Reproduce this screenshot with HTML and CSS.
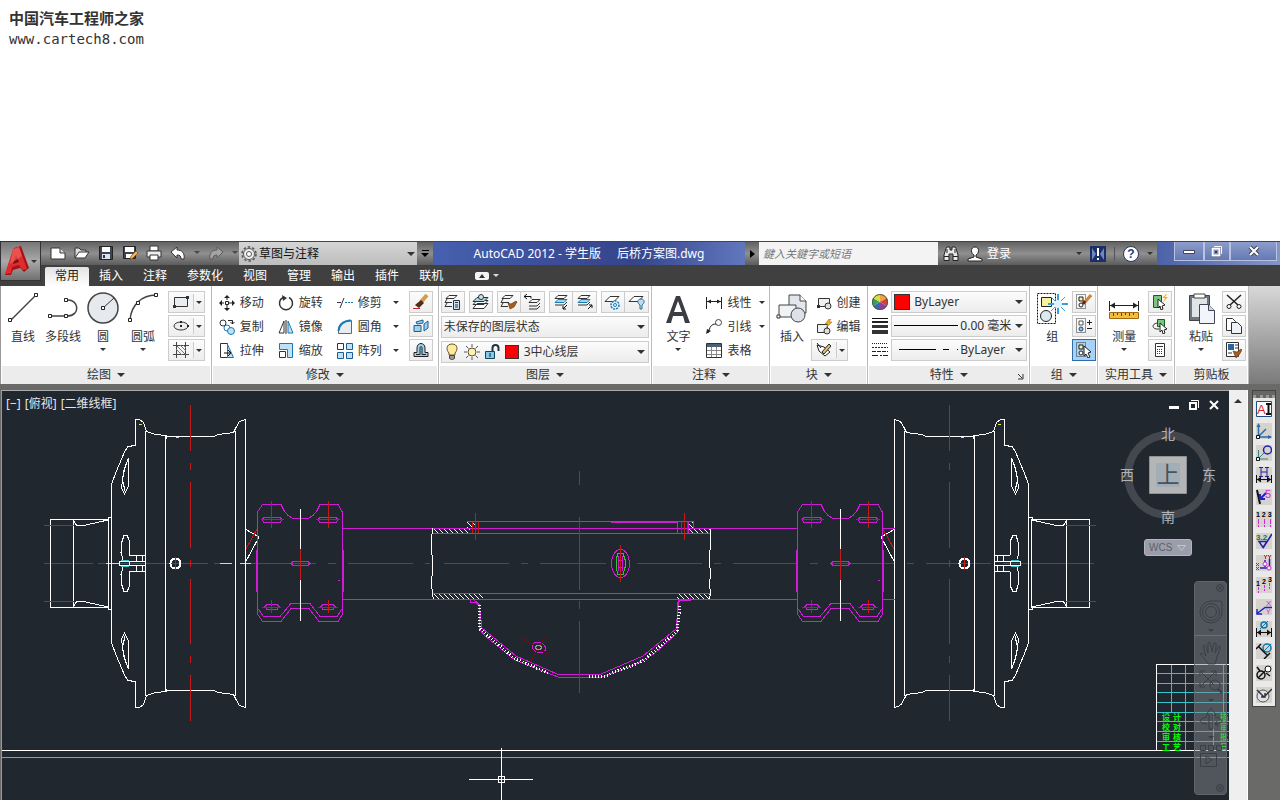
FILE: index.html
```
<!DOCTYPE html>
<html lang="zh-CN">
<head>
    <meta charset="UTF-8">
    <meta name="viewport" content="width=device-width, initial-scale=1.0">
    <title>AutoCAD 2012 - 学生版</title>
    <link rel="stylesheet" href="styles.css">
</head>
<body>
    <header class="site">
        <div class="site-name">中国汽车工程师之家</div>
        <div class="site-url">www.cartech8.com</div>
    </header>

    <div class="app">
        <div class="top">
            <button class="app-button" aria-label="应用程序菜单">
                <svg width="27" height="32" viewBox="0 0 27 32"><path d="M10 3l7-2 8 22-5 4-4-4-7 2-2 5-6 0z" fill="#a81217"/><path d="M9 4l6-2 8 22-5 1-3-5-7 2-1 6-6 1z" fill="#df2c2e"/><path d="M12 10l3 7-6 2z" fill="#7d0e12"/><path d="M9 4l6-2 3 9-12 8z" fill="#f26b62" opacity=".6"/></svg>
                <i class="caret dark"></i>
            </button>

            <div class="titlebar">
                <div class="qat">
                    <button aria-label="新建"><svg width="16" height="16" viewBox="0 0 16 16"><path d="M1 3h9l5 5v6H1z" fill="#fff" stroke="#333"/><path d="M10 3v5h5" fill="#ddd" stroke="#333"/></svg></button>
                    <button aria-label="打开"><svg width="16" height="16" viewBox="0 0 16 16"><path d="M1 13V3h4l2 2h5v3" fill="#ddd" stroke="#333"/><path d="M1 13l4-6h10l-4 6z" fill="#fff" stroke="#333"/></svg></button>
                    <button aria-label="保存"><svg width="16" height="16" viewBox="0 0 16 16"><path d="M1.500 1.500h13v13h-13z" fill="#3d454f" stroke="#222"/><path d="M4 2h8v5H4z" fill="#fff"/><path d="M4 9h8v5H4z" fill="#dbe4ee"/><path d="M5 10h2v3H5z" fill="#333"/></svg></button>
                    <button aria-label="另存为"><svg width="16" height="16" viewBox="0 0 16 16"><path d="M1.500 1.500h12v12h-12z" fill="#3d454f" stroke="#222"/><path d="M3 2h9v5H3zM4 9h7v4H4z" fill="#fff"/><path d="M8 15l1-4 5-5 2 2-5 5z" fill="#f2b648" stroke="#6b3d10" stroke-width=".6"/></svg></button>
                    <button aria-label="打印"><svg width="16" height="16" viewBox="0 0 16 16"><path d="M4 1h8v5H4z" fill="#fff" stroke="#333"/><path d="M1 6h14v6H1z" fill="#eee" stroke="#333"/><path d="M4 10h8v5H4z" fill="#fff" stroke="#333"/></svg></button>
                    <button aria-label="放弃"><svg width="16" height="16" viewBox="0 0 16 16"><path d="M1 7l6-5v3c5 0 8 3 7 9h-3c0-3-1-4-4-4v3z" fill="#fff" stroke="#333"/></svg></button>
                    <i class="caret dark"></i>
                    <button aria-label="重做"><svg width="16" height="16" viewBox="0 0 16 16"><path d="M15 7L9 2v3C4 5 1 8 2 14h3c0-3 1-4 4-4v3z" fill="#a4a4a4" stroke="#5c5c5c"/></svg></button>
                    <i class="caret dark"></i>
                </div>
                <div class="workspace-pick">
                    <svg width="16" height="16" viewBox="0 0 16 16"><circle cx="8" cy="8" r="7" fill="none" stroke="#555" stroke-width="1.500" stroke-dasharray="2.500 2"/><circle cx="8" cy="8" r="5.500" fill="#eee" stroke="#555"/><circle cx="8" cy="8" r="2.500" fill="#fff" stroke="#555"/></svg>
                    <select aria-label="工作空间"><option>草图与注释</option></select>
                    <i class="caret dark big-caret"></i>
                </div>
                <button class="more" aria-label="自定义"><span></span><i class="caret black"></i></button>
                <div class="doc-title"><span>AutoCAD 2012 - 学生版</span><span>后桥方案图.dwg</span></div>
                <button class="next" aria-label="展开"><i></i></button>
                <input class="search" type="text" placeholder="鍵入关鍵字或短语" aria-label="搜索">
                <div class="account">
                    <button aria-label="搜索"><svg width="16" height="16" viewBox="0 0 16 16"><path d="M3 2.500l1-1.500h3v3h2V1h3l1 1.500 2 6.500v5.500h-5V8H6v6.500H1V9z" fill="#e8e8e8" stroke="#222"/><path d="M1 10.500h5M10 10.500h5M4 3v4M12 3v4" stroke="#222"/></svg></button>
                    <button class="login"><svg width="16" height="16" viewBox="0 0 16 16"><path d="M8 1c5 0 4 7 1 8v2l6 2v2H1v-2l6-2V9C4 8 3 1 8 1z" fill="#fff" stroke="#222"/></svg>登录</button>
                    <i class="caret dark push"></i>
                    <button aria-label="交换"><svg width="16" height="16" viewBox="0 0 16 16"><path d="M0 0h16v16H0z" fill="#1b2f66"/><path d="M2 2l4 6-4 6zM14 2l-4 6 4 6z" fill="#7186c2"/><path d="M7 2h2v8H7zM7 12h2v2H7z" fill="#fff"/></svg></button>
                    <i class="sep"></i>
                    <button aria-label="帮助"><svg width="16" height="16" viewBox="0 0 16 16"><circle cx="8" cy="8" r="7.500" fill="#fff" stroke="#24355f"/><text x="8" y="12" text-anchor="middle" font-size="12" font-weight="bold" fill="#1d3c80">?</text></svg></button>
                    <i class="caret dark"></i>
                </div>
                <div class="win">
                    <button aria-label="最小化"><svg width="14" height="12" viewBox="0 0 14 12"><path d="M1.500 5.500h11v3h-11z" fill="#fff" stroke="#445"/></svg></button>
                    <button aria-label="还原"><svg width="12" height="12" viewBox="0 0 12 12"><path d="M3.500 1.500h7v7h-7z" fill="#cdd7ee" stroke="#fff"/><path d="M1.500 3.500h7v7h-7z" fill="#8193c4" stroke="#445" stroke-width="3"/><path d="M1.500 3.500h7v7h-7z" fill="#8193c4" stroke="#fff" stroke-width="2"/><path d="M4 6h2v2H4z" fill="#334"/></svg></button>
                    <button aria-label="关闭"><svg width="12" height="12" viewBox="0 0 12 12"><path d="M2 2l8 8M10 2l-8 8" stroke="#445" stroke-width="4"/><path d="M2 2l8 8M10 2l-8 8" stroke="#fff" stroke-width="2"/></svg></button>
                </div>
            </div>

            <nav class="tabs">
                <a class="active" href="#">常用</a>
                <a href="#">插入</a>
                <a href="#">注释</a>
                <a href="#">参数化</a>
                <a href="#">视图</a>
                <a href="#">管理</a>
                <a href="#">输出</a>
                <a href="#">插件</a>
                <a href="#">联机</a>
                <button class="fold" aria-label="最小化功能区"><svg width="14" height="8" viewBox="0 0 14 8"><rect width="14" height="8" rx="2" fill="#f4f4f4"/><path d="M4 6l3-4 3 4z" fill="#333"/></svg><i class="caret light"></i></button>
            </nav>
        </div>

        <div class="ribbon">
            <section class="panel">
                <div class="body draw">
                    <button class="big"><svg width="32" height="32" viewBox="0 0 32 32"><path d="M4 28L28 4" stroke="#444" stroke-width="1.500"/><path d="M1.500 26.500h3v3h-3zM27.500 1.500h3v3h-3z" fill="#fff" stroke="#222"/></svg>直线</button>
                    <button class="big"><svg width="32" height="32" viewBox="0 0 32 32"><path d="M4 24h16c14 0 12-17 0-16" fill="none" stroke="#444" stroke-width="1.500"/><path d="M1.500 22.500h3v3h-3zM17.500 22.500h3v3h-3zM17.500 6.500h3v3h-3z" fill="#fff" stroke="#222"/></svg>多段线</button>
                    <button class="big"><svg width="32" height="32" viewBox="0 0 32 32"><circle cx="16" cy="16" r="15" fill="#e6eaef" stroke="#444" stroke-width="1.500"/><path d="M16 16L27 6" stroke="#333"/><path d="M14.500 14.500h3v3h-3z" fill="#fff" stroke="#222"/></svg>圆<i class="caret dark"></i></button>
                    <button class="big"><svg width="32" height="32" viewBox="0 0 32 32"><path d="M3 28C4 13 15 3 29 3" fill="none" stroke="#444" stroke-width="1.500"/><path d="M1.500 26.500h3v3h-3zM9.500 9.500h3v3h-3zM27.500 1.500h3v3h-3z" fill="#fff" stroke="#222"/></svg>圆弧<i class="caret dark"></i></button>
                    <div class="stack">
                        <button class="split" aria-label="矩形"><svg width="16" height="16" viewBox="0 0 16 16"><path d="M1.500 3.500h13v9h-13z" fill="#e9edf2" stroke="#333"/><path d="M0 11h3v3H0zM13 2h3v3h-3z" fill="#333"/></svg><i class="caret dark"></i></button>
                        <button class="split" aria-label="椭圆"><svg width="16" height="16" viewBox="0 0 16 16"><ellipse cx="8" cy="8" rx="7" ry="4" fill="#eee" stroke="#333"/><path d="M7 7h2v2H7zM14 7h2v2h-2zM7 3h2v2H7z" fill="#222"/></svg><i class="caret dark"></i></button>
                        <button class="split" aria-label="图案填充"><svg width="16" height="16" viewBox="0 0 16 16"><path d="M3.500 0v16M12.500 0v16M0 3.500h16M0 12.500h16" stroke="#444"/><path d="M4 4l9 9M7 3l6 6M3 7l6 6M10 3l3 3" stroke="#777"/></svg><i class="caret dark"></i></button>
                    </div>
                </div>
                <h2>绘图<i class="caret dark big-caret"></i></h2>
            </section>

            <section class="panel">
                <div class="body modify">
                    <button class="small"><svg width="16" height="16" viewBox="0 0 16 16"><path d="M8 0l3 3H5zM8 16l3-3H5zM0 8l3-3v6zM16 8l-3-3v6z" fill="#222"/><path d="M8 2v12M2 8h12" stroke="#222" stroke-dasharray="3 1"/><path d="M6.500 6.500h3v3h-3z" fill="#fff" stroke="#222"/></svg>移动</button>
                    <button class="small"><svg width="16" height="16" viewBox="0 0 16 16"><path d="M5 2.500a6.500 6.500 0 1 0 6 0" fill="none" stroke="#333" stroke-width="1.500"/><path d="M4 0l5 3-4 3z" fill="#333"/></svg>旋转</button>
                    <button class="small"><svg width="16" height="16" viewBox="0 0 16 16"><path d="M0 7.500h4M3 13L7 3" stroke="#333"/><path d="M8 7.500h8" stroke="#1a78b5" stroke-dasharray="2 1"/></svg>修剪<i class="caret dark"></i></button>
                    <button class="tool" aria-label="删除"><svg width="16" height="16" viewBox="0 0 16 16"><path d="M14 1L8 8" stroke="#d99a4e" stroke-width="4"/><path d="M8 6l3 3-5 5-4-3z" fill="#4a2e18"/><path d="M0 14.500h7" stroke="#c22"/></svg></button>

                    <button class="small"><svg width="16" height="16" viewBox="0 0 16 16"><circle cx="4" cy="4" r="3" fill="#fff" stroke="#333"/><circle cx="8" cy="9" r="3" fill="#fff" stroke="#1a78b5"/><circle cx="12" cy="12" r="3.500" fill="#bfe0f5" stroke="#1a78b5"/><path d="M9 1.500h4.500V5M11.500 3l2 2 2-2" fill="none" stroke="#222"/></svg>复制</button>
                    <button class="small"><svg width="16" height="16" viewBox="0 0 16 16"><path d="M6 2v12H1z" fill="#fff" stroke="#333"/><path d="M10 2v12h5z" fill="#bfe0f5" stroke="#1a78b5"/><path d="M8 1v14" stroke="#222"/></svg>镜像</button>
                    <button class="small"><svg width="16" height="16" viewBox="0 0 16 16"><path d="M1.500 14.500V11C2 5 6 2 14.500 1.500v13z" fill="#e9edf2" stroke="#666"/><path d="M1.500 12C2 5 6 2 14 1.500" fill="none" stroke="#1a78b5" stroke-width="2"/></svg>圆角<i class="caret dark"></i></button>
                    <button class="tool" aria-label="分解"><svg width="16" height="16" viewBox="0 0 16 16"><path d="M1 7.500h7v6H1zM3 4l7-2v3l-6 1zM11 6l4-3v7l-4 3z" fill="#9fd0ee" stroke="#145f94"/></svg></button>

                    <button class="small"><svg width="16" height="16" viewBox="0 0 16 16"><path d="M1.500.5h7v14h-7z" fill="#fff" stroke="#333"/><path d="M8.500 1.500l6 13h-6z" fill="#bfe0f5" stroke="#1a78b5"/><path d="M5 10h6M9 7l3 3-3 3" fill="none" stroke="#111"/></svg>拉伸</button>
                    <button class="small"><svg width="16" height="16" viewBox="0 0 16 16"><path d="M1.500.5h13v14h-5v-8h-8z" fill="#bfe0f5" stroke="#1a78b5"/><path d="M1.500 8.500h6v6h-6z" fill="#fff" stroke="#333"/></svg>缩放</button>
                    <button class="small"><svg width="16" height="16" viewBox="0 0 16 16"><path d="M.5.500h6v6h-6z" fill="#fff" stroke="#333"/><path d="M9.500.5h6v6h-6zM.5 9.500h6v6h-6zM9.500 9.500h6v6h-6z" fill="#bfe0f5" stroke="#1a5f90"/></svg>阵列<i class="caret dark"></i></button>
                    <button class="tool" aria-label="偏移"><svg width="16" height="16" viewBox="0 0 16 16"><path d="M1 14.500h14v-4h-3V6c0-6-8-6-8 0v4.500H1z" fill="#9fd0ee" stroke="#222"/><path d="M3 12.500h4V6c0-2 2-2 2 0v6.500h4" fill="none" stroke="#222"/></svg></button>
                </div>
                <h2>修改<i class="caret dark big-caret"></i></h2>
            </section>

            <section class="panel">
                <div class="body layers">
                    <div class="tool-row">
                        <button class="tool" aria-label="图层特性"><svg width="18" height="16" viewBox="0 0 18 16"><path d="M5 1.500h8l-3 3H2zM3 5l-2 3.500h7M3 9l-2 3.500h7" fill="none" stroke="#333"/><path d="M9.500 6.500h6v9h-6z" fill="#cfe2f2" stroke="#234"/><path d="M11 8.500h3M11 11h3M11 13h3" stroke="#234"/></svg></button>
                        <button class="tool" aria-label="置为当前"><svg width="18" height="16" viewBox="0 0 18 16"><path d="M5 9.500h11l-4 5H1zM5 6.500h11l-4 4H1z" fill="#fff" stroke="#333"/><path d="M5 3.500h11l-4 4H1z" fill="#9fd8ee" stroke="#234"/><circle cx="9" cy="3" r="2.500" fill="#ddd" stroke="#333"/></svg></button>
                        <div class="pair">
                            <button class="tool" aria-label="匹配"><svg width="18" height="16" viewBox="0 0 18 16"><path d="M5 1.500h8l-3 3H2zM3 5l-2 3.500h8M3 9l-2 3.500h7" fill="none" stroke="#333"/><path d="M8 9l3 1 5-3 1 1-3 5-4 2z" fill="#a65d20" stroke="#5b300c" stroke-width=".6"/></svg></button>
                            <button class="tool" aria-label="上一个"><svg width="18" height="16" viewBox="0 0 18 16"><path d="M8 5.500h8l-3 3H5zM16 9l-3 3H5M16 12l-3 3H5" fill="none" stroke="#333"/><path d="M0 2.500h7v2M3 0L0 2.500 3 5" fill="none" stroke="#111"/></svg></button>
                        </div>
                        <div class="pair">
                            <button class="tool" aria-label="隔离"><svg width="18" height="16" viewBox="0 0 18 16"><path d="M6 1.500h9l-3 3H3zM15 8l-3 3H3" fill="none" stroke="#333"/><path d="M6 5.500h9l-3 3H3z" fill="#9fd8ee" stroke="#1a78b5"/><path d="M15 11l-4 4M11 12v3h3" fill="none" stroke="#111"/></svg></button>
                            <button class="tool" aria-label="取消隔离"><svg width="18" height="16" viewBox="0 0 18 16"><path d="M5 1.500h9l-3 3H2zM14 8l-3 3H2" fill="none" stroke="#333"/><path d="M5 5.500h9l-3 3H2z" fill="#9fd8ee" stroke="#1a78b5"/><path d="M12 15l4-4M13 11h3v3" fill="none" stroke="#111"/></svg></button>
                        </div>
                        <div class="pair">
                            <button class="tool" aria-label="冻结"><svg width="18" height="16" viewBox="0 0 18 16"><path d="M6 2.500h9l-5 5H1z" fill="#fff" stroke="#333"/><circle cx="11" cy="11" r="4" fill="#e5f4fc" stroke="#1a78b5" stroke-width="1.500" stroke-dasharray="2 1"/><circle cx="11" cy="11" r="1.500" fill="#fff" stroke="#1a78b5"/></svg></button>
                            <button class="tool" aria-label="关闭"><svg width="18" height="16" viewBox="0 0 18 16"><path d="M6 2.500h9l-5 5H1z" fill="#fff" stroke="#333"/><path d="M13 5c4 0 4 4 1 6v4h-2v-4c-3-2-3-6 1-6z" fill="#b9dcf2" stroke="#3a6c94"/></svg></button>
                        </div>
                    </div>
                    <div class="drop"><select aria-label="图层状态"><option>未保存的图层状态</option></select><i class="caret dark big-caret"></i></div>
                    <div class="drop layer-drop">
                        <svg width="16" height="18" viewBox="0 0 16 18"><path d="M8 1c6 0 6 6 3 9v2H5v-2C2 7 2 1 8 1z" fill="#ffe9a0" stroke="#665522"/><path d="M5.500 12.500h5v3l-2 1h-1l-2-1z" fill="#999" stroke="#444"/></svg>
                        <svg width="16" height="18" viewBox="0 0 16 18"><path d="M8 1v16M0 9h16M2 3l12 12M14 3L2 15" stroke="#555"/><circle cx="8" cy="9" r="5" fill="#fff"/><circle cx="8" cy="9" r="4" fill="#fff2a8" stroke="#554"/></svg>
                        <svg width="16" height="18" viewBox="0 0 16 18"><path d="M8.500 8V5c0-4 6-4 6 0v3" fill="none" stroke="#234" stroke-width="2"/><path d="M1.500 8.500h9v7h-9z" fill="#86c8ee" stroke="#145"/><path d="M6 10v4" stroke="#123"/></svg>
                        <span class="swatch"></span>
                        <select aria-label="图层"><option>3中心线层</option></select><i class="caret dark big-caret"></i>
                    </div>
                </div>
                <h2>图层<i class="caret dark big-caret"></i></h2>
            </section>

            <section class="panel">
                <div class="body annotate">
                    <button class="big"><svg width="32" height="32" viewBox="0 0 32 32"><path d="M14 4h4l10 27h-5l-2-7H11l-2 7H4zM16 9l-4 11h8z" fill="#3a3d42" fill-rule="evenodd"/></svg>文字<i class="caret dark"></i></button>
                    <div class="stack">
                        <button class="small"><svg width="16" height="16" viewBox="0 0 16 16"><path d="M.5 2v12M15.500 2v12M1 6.500h14" stroke="#222"/><path d="M1 6.500l4-2v4zM15 6.500l-4-2v4z" fill="#222"/></svg>线性<i class="caret dark"></i></button>
                        <button class="small"><svg width="16" height="16" viewBox="0 0 16 16"><circle cx="12.500" cy="3.500" r="3" fill="#fff" stroke="#444"/><path d="M10 5C5 5 4 8 2 14" fill="none" stroke="#222"/><path d="M0 15l1-5 4 2z" fill="#222"/></svg>引线<i class="caret dark"></i></button>
                        <button class="small"><svg width="16" height="16" viewBox="0 0 16 16"><path d="M.5.500h15v14H.5z" fill="#fff" stroke="#333"/><path d="M1 1h14v3H1z" fill="#4c6078"/><path d="M1 7.500h14M1 11.500h14M5.500 4v10M10.500 4v10" stroke="#888"/></svg>表格</button>
                    </div>
                </div>
                <h2>注释<i class="caret dark big-caret"></i></h2>
            </section>

            <section class="panel">
                <div class="body block">
                    <button class="big"><svg width="32" height="32" viewBox="0 0 32 32"><path d="M13 3h11l6 6v12H13z" fill="#e3e7ec" stroke="#444"/><path d="M24 3v6h6" fill="#fff" stroke="#444"/><path d="M3 13h17v12H3z" fill="#f0f3f6" stroke="#444"/><circle cx="22" cy="23" r="7" fill="#dde2e8" stroke="#444"/><path d="M1 23h3v3H1z" fill="#fff" stroke="#333"/></svg>插入</button>
                    <div class="stack">
                        <button class="small"><svg width="16" height="16" viewBox="0 0 16 16"><path d="M2.500 3.500h11v8h-11z" fill="#eef1f4" stroke="#333"/><circle cx="12" cy="11" r="3" fill="#ddd" stroke="#333"/><path d="M1 10h3v3H1z" fill="#333"/></svg>创建</button>
                        <button class="small"><svg width="16" height="16" viewBox="0 0 16 16"><path d="M1.500 5.500h10v8h-10z" fill="#eef1f4" stroke="#333"/><circle cx="11" cy="12" r="3" fill="#ddd" stroke="#333"/><path d="M13 0L9 5h3l-2 4 6-6h-3l2-3z" fill="#f7b12d" stroke="#a05a10" stroke-width=".5"/></svg>编辑</button>
                        <button class="split" aria-label="属性"><svg width="16" height="16" viewBox="0 0 16 16"><path d="M1 3l7 2 6 5-5 4-6-5z" fill="#fff" stroke="#222"/><path d="M1 1l4 5M6 10l7-8 2 2-7 8z" fill="#e9c16c" stroke="#222"/></svg><i class="caret dark"></i></button>
                    </div>
                </div>
                <h2>块<i class="caret dark big-caret"></i></h2>
            </section>

            <section class="panel">
                <div class="body props">
                    <svg width="16" height="16" viewBox="0 0 16 16"><path d="M8 8V0a8 8 0 0 1 7 4z" fill="#f2a23a"/><path d="M8 8l7-4a8 8 0 0 1 0 8z" fill="#d8412f"/><path d="M8 8l7 4a8 8 0 0 1-7 4z" fill="#8d3f98"/><path d="M8 8v8a8 8 0 0 1-7-4z" fill="#3767b5"/><path d="M8 8l-7 4a8 8 0 0 1 0-8z" fill="#35a05a"/><path d="M8 8L1 4a8 8 0 0 1 7-4z" fill="#d9dd4a"/><circle cx="8" cy="8" r="7.500" fill="none" stroke="#555"/></svg>
                    <div class="drop"><span class="swatch wide"></span><select aria-label="对象颜色"><option>ByLayer</option></select><i class="caret dark big-caret"></i></div>
                    <svg width="16" height="16" viewBox="0 0 16 16"><path d="M0 .5h16" stroke="#111"/><path d="M0 4h16" stroke="#222" stroke-width="2"/><path d="M0 8.500h16" stroke="#333" stroke-width="3"/><path d="M0 14h16" stroke="#333" stroke-width="4"/></svg>
                    <div class="drop line-drop"><svg width="64" height="2" viewBox="0 0 64 2"><path d="M0 .5h64" stroke="#000"/></svg><select aria-label="线宽"><option>0.00 毫米</option></select><i class="caret dark big-caret"></i></div>
                    <svg width="16" height="16" viewBox="0 0 16 16"><path d="M0 1.500h16" stroke="#222" stroke-dasharray="1 1"/><path d="M0 5.500h16" stroke="#222" stroke-dasharray="2 1"/><path d="M0 9.500h16" stroke="#222" stroke-dasharray="4 1"/><path d="M0 13.500h16" stroke="#222" stroke-dasharray="6 2 2 1"/></svg>
                    <div class="drop line-drop"><svg width="64" height="2" viewBox="0 0 64 2"><path d="M5 .5h37M49 .5h6M63 .5h1" stroke="#000"/></svg><select aria-label="线型"><option>ByLayer</option></select><i class="caret dark big-caret"></i></div>
                </div>
                <h2>特性<i class="caret dark big-caret"></i><svg class="launcher" width="7" height="7" viewBox="0 0 7 7"><path d="M1 1l4 4M6 1v5H1" fill="none" stroke="#333"/></svg></h2>
            </section>

            <section class="panel">
                <div class="body side">
                    <button class="big"><svg width="32" height="32" viewBox="0 0 32 32"><path d="M1.500 1.500h18v30h-18z" fill="none" stroke="#111" stroke-dasharray="2 1"/><path d="M5.500 5.500h10v9h-10z" fill="#f4f3a2" stroke="#222"/><circle cx="10" cy="24" r="5.500" fill="#dcebf2" stroke="#222"/><path d="M22 2v20M12 12h20" stroke="#3d9fd8" stroke-width="2"/><path d="M15 5l14 14M29 5L15 19" stroke="#3d9fd8"/><circle cx="22" cy="12" r="4" fill="#dff3fd"/></svg>组</button>
                    <div class="stack">
                        <button class="tool" aria-label="解除编组"><svg width="16" height="16" viewBox="0 0 16 16"><path d="M.5.5h9v14h-9z" fill="none" stroke="#333" stroke-dasharray="1 1"/><path d="M3 3h4v4H3z" fill="#f4f3a2" stroke="#222"/><circle cx="5" cy="11" r="2" fill="#fff" stroke="#222"/><path d="M15 1L9 8" stroke="#c88838" stroke-width="3"/><path d="M9 7l-2 3" stroke="#622" stroke-width="3"/></svg></button>
                        <button class="tool" aria-label="组编辑"><svg width="16" height="16" viewBox="0 0 16 16"><path d="M.5.5h9v14h-9z" fill="none" stroke="#333" stroke-dasharray="1 1"/><path d="M3 3h4v4H3z" fill="#fff" stroke="#555"/><circle cx="5" cy="11" r="2" fill="#8fc4ee" stroke="#246"/><path d="M11 4.500h5M13.500 2v5M11 10.500h5" stroke="#222"/></svg></button>
                        <button class="tool on" aria-label="启用组选择"><svg width="16" height="16" viewBox="0 0 16 16"><path d="M.5.5h9v14h-9z" fill="none" stroke="#333" stroke-dasharray="1 1"/><path d="M3 3h4v4H3z" fill="#f4f3a2" stroke="#222"/><circle cx="5" cy="11" r="2" fill="#fff" stroke="#222"/><path d="M8 4l7 6-3 1 2 4-2 1-2-4-2 2z" fill="#fff" stroke="#222"/></svg></button>
                    </div>
                </div>
                <h2>组<i class="caret dark big-caret"></i></h2>
            </section>

            <section class="panel">
                <div class="body side roomy">
                    <button class="big"><svg width="32" height="32" viewBox="0 0 32 32"><path d="M1.500 9v10M30.500 9v10M2 13.500h28" stroke="#222"/><path d="M2 13.500l5-3v6zM30 13.500l-5-3v6z" fill="#222"/><path d="M1.500 20.500h29v6h-29z" fill="#f1bd3f" stroke="#a06a10"/><path d="M5.500 21v3M9.500 21v2M13.500 21v3M17.500 21v2M21.500 21v3M25.500 21v2" stroke="#6b4208"/></svg>测量<i class="caret dark"></i></button>
                    <div class="stack">
                        <button class="tool" aria-label="快速选择"><svg width="16" height="16" viewBox="0 0 16 16"><path d="M1.500 1.500h8v12h-8z" fill="#7cc57e" stroke="#145f20"/><path d="M6 5l7 6-3 1 1 3-2 1-1-4-2 2z" fill="#fff" stroke="#222"/><path d="M14 0l-4 4h3l-2 4 5-5h-3l2-3z" fill="#f7b12d"/></svg></button>
                        <button class="tool" aria-label="全部选择"><svg width="16" height="16" viewBox="0 0 16 16"><path d="M5.500 1.500h7v7h-7z" fill="#7cc57e" stroke="#145f20"/><path d="M5 5c-6 1-5 7 2 6" fill="none" stroke="#333"/><path d="M8 5l7 6-3 1 1 3-2 1-1-4-2 2z" fill="#fff" stroke="#222"/></svg></button>
                        <button class="tool" aria-label="计算器"><svg width="16" height="16" viewBox="0 0 16 16"><path d="M3.500 1.500h9v13h-9z" fill="#fff" stroke="#333"/><path d="M5 4.500h6" stroke="#333"/><path d="M5 7.500h6M5 9.500h6M5 11.500h6" stroke="#333" stroke-dasharray="1 1"/></svg></button>
                    </div>
                </div>
                <h2>实用工具<i class="caret dark big-caret"></i></h2>
            </section>

            <section class="panel">
                <div class="body side roomy">
                    <button class="big"><svg width="32" height="32" viewBox="0 0 32 32"><path d="M4.500 3.500h20v25h-20z" fill="#6e7680" stroke="#444"/><path d="M7 6h15v19H7z" fill="#e2e5e8"/><path d="M9 2h11v4H9z" fill="#fff" stroke="#444"/><path d="M14.500 12.500h9l6 6v13h-15z" fill="#f2f6fa" stroke="#445"/><path d="M23.500 12.500v6h6" fill="#cdd7e2" stroke="#445"/></svg>粘贴<i class="caret dark"></i></button>
                    <div class="stack">
                        <button class="tool" aria-label="剪切"><svg width="16" height="16" viewBox="0 0 16 16"><path d="M1 1l11 10M15 1L4 11" stroke="#222" stroke-width="1.500"/><circle cx="3" cy="12.500" r="2" fill="#fff" stroke="#222"/><circle cx="13" cy="12.500" r="2" fill="#fff" stroke="#222"/></svg></button>
                        <button class="tool" aria-label="复制"><svg width="16" height="16" viewBox="0 0 16 16"><path d="M.5.500h6l3 3v9h-9z" fill="#fff" stroke="#333"/><path d="M5.500 4.500h6l4 4v7h-10z" fill="#eef2f6" stroke="#333"/></svg></button>
                        <button class="tool" aria-label="特性匹配"><svg width="16" height="16" viewBox="0 0 16 16"><path d="M.5.5h12v14H.5z" fill="#fff" stroke="#333"/><path d="M2 2h6v6H2z" fill="#2c659c"/><path d="M9 3h3M9 6h3M2 11h4" stroke="#333"/><path d="M7 9l4 1 4-3 1 1-3 5-3 3z" fill="#a65d20" stroke="#5b300c" stroke-width=".6"/></svg></button>
                    </div>
                </div>
                <h2>剪贴板</h2>
            </section>
            <div class="ribbon-rest"></div>
        </div>

        <div class="workspace">
            <main class="viewport">
                <svg class="drawing" viewBox="2 391 1227 409">
                    <defs>
                        <pattern id="hatch" width="5" height="5" patternUnits="userSpaceOnUse"><path d="M0 0l5 5" stroke="#fff"/></pattern>

                        <!-- rim and hub, upper half only -->
                        <g id="half-wheel">
                            <path d="M50.500 564V519.500H108.500M73.500 564V519.500M73 520l4 6 9-1 22-5M108.500 564V519M111.500 564V484l5-13 8-19 3-5 8-2V419.500h4l4 3 3 9 9 3 11 1v3M111 517.500h-3v3"/>
                            <path d="M145.500 564V431M165.500 564V436.500h48l5-2 15-2 2-4 4-7 6-2V564M235.500 564V431"/>
                            <path d="M128.500 458l-5 14-2 16 3 6 4-8zM125.500 464l-3 16 3 13"/>
                            <path d="M145 555.500h-15l-1-16-2-4h-3l-2 6-1 11 2 7M136.500 555v6M142.500 555v6M130 561.500h15"/>
                        </g>
                        <g id="wheel">
                            <g class="white">
                                <use href="#half-wheel"/>
                                <use href="#half-wheel" transform="matrix(1 0 0 -1 0 1127)"/>
                                <circle cx="175.500" cy="563.500" r="5" stroke-width="2"/>
                                <path d="M245 529l14 8-14 26M119.500 561.500h10v4h-10z"/>
                            </g>
                            <path class="cyan" d="M121 560.500h8M121 566.500h8"/>
                            <g class="red">
                                <path d="M190.500 405v46M190.500 463v7M190.500 482v66M190.500 560v7M190.500 579v65M190.500 656v7M190.500 675v46"/>
                                <path d="M44 525.500h30M44 601.500h30M175.500 557v13M246 549l11-20"/>
                            </g>
                            <path class="yellow" d="M139 424.500h3M176 437.500h3"/>
                        </g>
                        <g id="bracket">
                            <g class="magenta">
                                <path d="M262.500 504.500H281l3 6 4 5 5 3h15l5-3 4-5 3-6h18l4.500 8V614l-4.500 7.500H319l-10-13h-18l-10 13h-18.500l-5-7.500V512z"/>
                                <path d="M257.500 608l6 8.500H280l11-13h19l10 13h17l5.500-8.500"/>
                                <path d="M264 517.500h16l2 2-2 3h-16l-2-3zM320 517.500h16l2 2-2 3h-16l-2-3zM267 604.500h10l2 2-2 3h-10l-2-3zM323 604.500h10l2 2-2 3h-10l-2-3zM293 561.500h15l2 2-2 2h-15l-2-2z"/>
                                <path d="M257 550v42M343 550v42" stroke-width="2"/>
                                <path d="M338 580.500h2"/>
                            </g>
                            <path class="white" d="M300.500 509v40M300.500 580v41"/>
                            <path class="red" d="M300.500 549v31M271.500 501v27M328.500 501v27M271.500 600v13M328.500 600v13M261 519.500h23M316 519.500h24M262 607.500h19M318 607.500h20"/>
                        </g>
                    </defs>

                    <path class="red" d="M44 563.500h49M98 563.500h110M214 563.500h6M246 563.500h70M328 563.500h8M348 563.500h65M425 563.500h5M444 563.500h65M521 563.500h7M540 563.500h66M637 563.500h65M714 563.500h7M733 563.500h64M810 563.500h8M830 563.500h65M907 563.500h7M926 563.500h65M1003 563.500h91"/>
                    <path class="yellow" d="M106 563.500h13M220 563.500h12M240 563.500h11"/>
                    <use href="#wheel"/>
                    <use href="#wheel" transform="matrix(-1 0 0 1 1140 0)"/>
                    <use href="#bracket"/>
                    <use href="#bracket" transform="translate(540 0)"/>

                    <!-- axle housing -->
                    <path fill="url(#hatch)" d="M432 529h38v5h-38zM688 529h22v5h-22zM433 593h50v6h-50zM677 593h33v6h-33zM467 522h9v7h-9zM689 521h4v8h-4z"/>
                    <g class="magenta">
                        <path d="M343 528.500h455M343 599.500h455M883 528.500h12M883 599.500h12M432 533.500h278M433 593.500h277M467 521.500h226v7M677.500 521v12M688.500 521v12"/>
                        <path d="M611 522h66" stroke-width="2"/>
                        <path d="M470 600v2h6l3 4 1 24 5 6 30 24 20 8 23 9h44l32-12 20-11 23-21 1-31 3-2h9v-2"/>
                        <path d="M474 600l5 4 3 24 34 28 41 18h44l42-18 33-27 3-30"/>
                        <ellipse cx="620.500" cy="563.500" rx="9" ry="14"/>
                        <path d="M618.500 556v15M622.500 556v15M618 560.500h5M618 567.500h5"/>
                        <ellipse cx="539" cy="647.500" rx="7" ry="5" transform="rotate(20 539 647)"/>
                    </g>
                    <path class="white shell" d="M479 605l1 24 34 29 34 15M589 677l16-1 38-15 34-30 3-26"/>
                    <path class="green" d="M618 553.500h5l2 6v8l-2 7h-5l-2-7v-8z"/>
                    <path class="darkred" d="M521 638l29 17M545 637l-15 25"/>
                    <ellipse class="gray" cx="538.500" cy="647.500" rx="3" ry="2"/>
                    <path class="white" d="M432.500 528.500l-1 12 1 28-1 15 1 10 1 6M710.500 528.500v12l-1 20 1 14-1 10 1 8-1 7"/>
                    <path class="red" d="M579.500 471v14M579.500 517v73M579.500 601v8M579.500 621v72M475.500 513v27M684.500 513v27M472.500 522v11M478.500 522v11M681.500 522v11M687.500 522v11M620.500 545v37"/>

                    <!-- sheet frame and title block -->
                    <path class="cyan" d="M2 757.500h1227M1171.500 665v47M1185.500 665v85M1213.500 712v38M1223.500 665v47M1157 673.500h72M1157 683.500h72M1157 692.500h72M1157 702.500h72M1157 712.500h72M1157 721.500h72M1157 731.500h72M1157 741.500h72"/>
                    <path class="white" d="M2 750.500h1227M1156.500 750v-85.500h73"/>
                    <g class="block-text">
                        <text x="1162" y="720">设</text><text x="1173" y="720">计</text><text x="1220" y="720">描</text>
                        <text x="1162" y="730">校</text><text x="1173" y="730">对</text><text x="1220" y="730">审</text>
                        <text x="1162" y="740">审</text><text x="1173" y="740">核</text><text x="1220" y="740">批</text>
                        <text x="1162" y="750">工</text><text x="1173" y="750">艺</text><text x="1220" y="750">日</text>
                    </g>

                    <path class="white" d="M469 779.500h64M501.500 748v52M498.500 776.500h6v6h-6z"/>
                </svg>

                <div class="view-label"><span>[−]</span><span>[俯视]</span><span>[二维线框]</span></div>
                <div class="view-buttons">
                    <button aria-label="最小化"><svg width="12" height="12" viewBox="0 0 12 12"><path d="M1 7h10v3H1z" fill="#fff"/></svg></button>
                    <button aria-label="还原"><svg width="12" height="12" viewBox="0 0 12 12"><path d="M3 1.500h7.500V9" fill="none" stroke="#fff"/><path d="M2 4h6v6H2z" fill="none" stroke="#fff" stroke-width="2"/></svg></button>
                    <button aria-label="关闭"><svg width="12" height="12" viewBox="0 0 12 12"><path d="M2 2l8 8M10 2l-8 8" stroke="#fff" stroke-width="2"/></svg></button>
                </div>
                <svg class="viewcube" width="98" height="100" viewBox="0 0 98 100">
                    <circle cx="49" cy="49" r="40" fill="none" stroke="#43484f" stroke-width="8"/>
                    <path d="M30.500 30.500h37v37h-37z" fill="#b4b5b6" stroke="#8f9193"/>
                    <path d="M37 37h24v24H37z" fill="#a3adb5"/>
                    <text class="top-face" x="49" y="57">上</text>
                    <text x="49" y="13">北</text>
                    <text x="8" y="54">西</text>
                    <text x="90" y="54">东</text>
                    <text x="49" y="96">南</text>
                </svg>
                <button class="wcs">WCS<svg width="9" height="6" viewBox="0 0 9 6"><path d="M.5.5h8l-4 5z" fill="none" stroke="#c0c3cb"/></svg></button>
                <div class="navbar">
                    <button class="dot" aria-label="关闭"><svg width="8" height="8" viewBox="0 0 8 8"><circle cx="4" cy="4" r="3.500"/><path d="M2 2l4 4M6 2L2 6"/></svg></button>
                    <button aria-label="控制盘"><svg width="24" height="24" viewBox="0 0 24 24"><path d="M12 1a11 11 0 1 0 11 11V3a2 2 0 0 0-2-2z"/><circle cx="12" cy="12" r="5.500"/><circle cx="12" cy="12" r="8.500"/></svg><i class="caret dark"></i></button>
                    <hr>
                    <button aria-label="平移"><svg width="24" height="24" viewBox="0 0 24 24"><path d="M9 23c-2-4-5-7-8-10 2-2 4 0 6 2L4 5c2-2 3 0 5 7L9 2c2-2 3 0 4 9l2-9c2-1 3 0 1 10l4-7c2 0 2 1-2 11l-2 7z"/></svg></button>
                    <button aria-label="缩放"><svg width="24" height="24" viewBox="0 0 24 24"><path d="M2 2l13 13M16 2L2 16M1 6V1h5M12 1h5v5M1 12v5h5"/><circle cx="16" cy="15" r="5"/><path d="M19 19l4 4" stroke-width="2"/></svg><i class="caret dark"></i></button>
                    <button aria-label="动态观察"><svg width="24" height="24" viewBox="0 0 24 24"><path d="M10 22V8H7l5-7 5 7h-3v14zM8 10c-9 2-9 6 0 7M16 10c9 2 9 6 0 7l2-3M16 17l3 2"/></svg><i class="caret dark"></i></button>
                    <button aria-label="运动"><svg width="24" height="24" viewBox="0 0 24 24"><path d="M1.500 1.500h5v5h-5zM9.500 1.500h5v5h-5zM17.500 1.500h5v5h-5zM1.500 9.500h16v13h-16zM7 12v8l6-4z"/></svg></button>
                    <button class="dot" aria-label="选项"><svg width="8" height="8" viewBox="0 0 8 8"><circle cx="4" cy="4" r="3.500"/><path d="M2 3h4M2 5h4"/></svg></button>
                </div>
            </main>

            <div class="scrollbar"><i></i></div>

            <aside class="toolbar">
                <div class="grip"></div>
                <button aria-label="文字编辑"><svg width="16" height="16" viewBox="0 0 16 16"><path d="M.5.5h15v15H.5z" fill="#fff" stroke="#1c4f7e"/><text x="1" y="13" font-size="13" fill="#d22">A</text><path d="M10 3h5M10 13h5M12.500 3v10" stroke="#111" stroke-width="2"/></svg></button>
                <button aria-label="坐标"><svg width="16" height="16" viewBox="0 0 16 16"><path d="M2.500 2v12H15M3 13l7-7" fill="none" stroke="#2b6ca5" stroke-width="1.500"/><path d="M2.500 0l2 4h-4zM16 14l-4-2v4z" fill="#2b6ca5"/><path d="M.5 12.500h3v3h-3z" fill="#fff" stroke="#111"/></svg></button>
                <button aria-label="圆坐标"><svg width="16" height="16" viewBox="0 0 16 16"><path d="M2.500 5v9H12M3 13l5-5" fill="none" stroke="#3a8080"/><circle cx="11.500" cy="5" r="4" fill="none" stroke="#22a" stroke-width="1.500"/><path d="M.5 12.500h3v3h-3z" fill="#fff" stroke="#111"/></svg></button>
                <button aria-label="尺寸"><svg width="16" height="16" viewBox="0 0 16 16"><path d="M3 .5h4M5 0v9M3 9.500h4M9 .5h4M11 0v9M9 9.500h4M5 5h6" stroke="#229"/><path d="M.5 8v8M15.500 8v8M1 12.500h14" stroke="#111"/><path d="M1 12.500l4-3v6zM15 12.500l-4-3v6z" fill="#111"/></svg></button>
                <button aria-label="倒角"><svg width="16" height="16" viewBox="0 0 16 16"><path d="M1 1l3 14" stroke="#111" stroke-width="2"/><path d="M4 10l6-6M4 5v5h5" fill="none" stroke="#22c" stroke-width="2"/><text x="9" y="9" font-size="11" fill="#d2d">5</text></svg></button>
                <button aria-label="序号"><svg width="16" height="16" viewBox="0 0 16 16"><text x="0" y="6" font-size="7" font-weight="bold">1 2 3</text><path d="M2.500 8v8M8.500 8v8M14.500 8v8" stroke="#d2d" stroke-dasharray="5 1"/></svg></button>
                <button aria-label="粗糙度"><svg width="16" height="16" viewBox="0 0 16 16"><text x="0" y="7" font-size="8" font-weight="bold" fill="#171">3.2</text><path d="M3 8.500h8l-4 6zM7 15l9-14" fill="none" stroke="#22a" stroke-width="1.500"/></svg></button>
                <button aria-label="坐标标注"><svg width="16" height="16" viewBox="0 0 16 16"><path d="M13.500 4v9H4M9 5v7" fill="none" stroke="#22a" stroke-width="1.500"/><circle cx="9" cy="9" r="2" fill="#fff" stroke="#d2d"/><circle cx="13" cy="13" r="2" fill="#fff" stroke="#d2d"/><path d="M8 0l1.500 2L11 0M9.500 2v2M12 0l1.500 2L15 0M13.500 2v2M0 8l3 3M3 8l-3 3M0 12l3 3M3 12l-3 3" fill="none" stroke="#c22"/></svg></button>
                <button aria-label="引线序号"><svg width="16" height="16" viewBox="0 0 16 16"><text x="0" y="9" font-size="7" font-weight="bold">1</text><text x="6" y="7" font-size="7" font-weight="bold">2</text><text x="12" y="5" font-size="7" font-weight="bold">3</text><path d="M2.500 10v6M8.500 8v6M13.500 6v6" stroke="#d2d" stroke-dasharray="3 1"/></svg></button>
                <button aria-label="坐标引线"><svg width="16" height="16" viewBox="0 0 16 16"><path d="M16 8.500H9l-8 6M1 10v5h5" fill="none" stroke="#22c" stroke-width="1.500"/><text x="10" y="7" font-size="8" fill="#d2d">X</text><text x="10" y="15" font-size="7" fill="#d2d">Y</text></svg></button>
                <button aria-label="直径"><svg width="16" height="16" viewBox="0 0 16 16"><circle cx="8" cy="4" r="3" fill="none" stroke="#17a" stroke-width="1.500"/><path d="M4 8l8-8" stroke="#17a"/><path d="M.5 7v9M15.500 7v9M1 11.500h14" stroke="#111"/><path d="M1 11.500l4-3v6zM15 11.500l-4-3v6z" fill="#111"/></svg></button>
                <button aria-label="对齐直径"><svg width="16" height="16" viewBox="0 0 16 16"><circle cx="11" cy="5" r="4" fill="none" stroke="#17a" stroke-width="1.500"/><path d="M7 9l8-8" stroke="#17a"/><path d="M2 3l10 10M0 6l5-5M8 16l6-6" stroke="#111" stroke-width="1.500"/></svg></button>
                <button aria-label="孔径"><svg width="16" height="16" viewBox="0 0 16 16"><circle cx="5" cy="10" r="4" fill="none" stroke="#111" stroke-width="1.500"/><circle cx="12" cy="4" r="3" fill="#fff" stroke="#111"/><path d="M1 2l3 4M10 8l4 3M2 13l7-7" stroke="#111" stroke-width="1.500"/></svg></button>
                <button aria-label="半径"><svg width="16" height="16" viewBox="0 0 16 16"><circle cx="7" cy="9" r="6" fill="#dde3e8" stroke="#555"/><path d="M1 3l7 7 8-8M5 10h4V6" fill="none" stroke="#333" stroke-width="1.500"/></svg></button>
            </aside>
        </div>
    </div>
</body>
</html>
```
FILE: styles.css
```
* {
    box-sizing: border-box;
}
body {
    margin: 0;
    height: 100vh;
    display: flex;
    flex-direction: column;
    overflow: hidden;
    background: #fff;
    color: #333;
    font: 12px/16px "Noto Sans", "Noto Sans CJK SC", sans-serif;
}
button, input, select {
    font: inherit;
    color: inherit;
    margin: 0;
    padding: 0;
    border: 0;
    background: none;
}
svg {
    flex: none;
}
svg text {
    font-family: "Liberation Sans", "Noto Sans CJK SC", sans-serif;
}

.site {
    height: 241px;
    flex: none;
    padding: 7px 9px;
    color: #333;
}
.site-name {
    font: bold 15px/22px "Noto Sans CJK SC", sans-serif;
}
.site-url {
    font: 14px/20px "DejaVu Sans Mono", monospace;
}

.app {
    flex: 1;
    min-height: 0;
    display: flex;
    flex-direction: column;
    background: #6a6a68;
}

/* carets */
.caret {
    flex: none;
    width: 0;
    height: 0;
    border: 3px solid transparent;
    border-top-color: #333;
    border-bottom: 0;
}
.caret.big-caret {
    border-width: 4px;
    border-bottom: 0;
}
.caret.light {
    border-top-color: #ddd;
}
.caret.black {
    border-width: 4px;
    border-top-color: #000;
    border-bottom: 0;
}

/* title bar and tabs */
.top {
    display: grid;
    grid-template-columns: 41px minmax(0, 1fr);
    grid-template-rows: 24px 21px;
    background: #404040;
}
.app-button {
    grid-row: 1 / 3;
    height: 40px;
    display: flex;
    align-items: center;
    justify-content: space-between;
    padding: 0 3px;
    border: 1px solid #333;
    background: linear-gradient(#777, #aaa 50%, #707070);
}
.titlebar {
    display: grid;
    grid-template-columns: 198fr 178fr 16fr 312fr 14fr 179fr 219fr 123fr;
    background: linear-gradient(#626262, #8f8f8f 50%, #5c5c5c);
    border-top: 1px solid #444;
}
.titlebar > * {
    min-width: 0;
}
.titlebar button {
    display: flex;
    align-items: center;
    justify-content: center;
}
.qat {
    display: flex;
    align-items: center;
    gap: 8px;
    padding: 0 0 2px 9px;
}
.qat .caret {
    border-top-color: #484848;
}
.workspace-pick {
    display: flex;
    align-items: center;
    gap: 2px;
    padding: 0 2px;
    background: linear-gradient(#d5d5d5, #bdbdbd);
    color: #111;
}
select {
    appearance: none;
    flex: 1;
    min-width: 0;
    outline: none;
}
.more {
    flex-direction: column;
    gap: 2px;
}
.more span {
    width: 7px;
    height: 1px;
    background: #000;
}
.doc-title {
    display: flex;
    align-items: center;
    justify-content: center;
    gap: 16px;
    color: #fff;
    white-space: nowrap;
    background: linear-gradient(90deg, #4661b0, #3c4c96 40%, #34458c 65%, #6177bd);
}
.next i {
    border: 4px solid transparent;
    border-left: 5px solid #000;
    border-right: 0;
}
.search {
    width: 100%;
    padding: 0 4px;
    background: #f3f3f3;
    font-style: italic;
    font-size: 11px;
}
.search::placeholder {
    color: #777;
    opacity: 1;
}
.account {
    display: flex;
    align-items: center;
    gap: 8px;
    padding: 0 4px 0 5px;
    color: #fff;
}
.account .login {
    gap: 4px;
}
.account .push {
    margin-left: auto;
}
.account .sep {
    width: 1px;
    height: 14px;
    background: #555;
}
.win {
    display: grid;
    grid-template-columns: 30fr 26fr 47fr;
    padding: 0 3px 4px 17px;
    background: linear-gradient(90deg, #4c62a8, #8595c8);
}
.win button {
    border: 1px solid #b9c3df;
    border-top: 0;
    background: linear-gradient(#8d9dcb, #6479b4);
}
.tabs {
    display: flex;
    align-items: stretch;
    padding-left: 4px;
    color: #fff;
}
.tabs a {
    padding: 3px 10px 0;
    color: inherit;
    text-decoration: none;
}
.tabs .active {
    padding-top: 1px;
    margin-top: 2px;
    color: #222;
    background: linear-gradient(#e2e2e2, #fff);
    border-radius: 2px 2px 0 0;
}
.fold {
    display: flex;
    align-items: center;
    gap: 4px;
    margin-left: 22px;
}

/* ribbon */
.ribbon {
    display: grid;
    grid-template-columns: 211fr 227fr 214fr 118fr 98fr 162fr 68fr 77fr 74fr 31fr;
    height: 98px;
    flex: none;
    background: #fff;
    border-left: 1px solid #999;
}
.ribbon-rest {
    background: linear-gradient(#d8d8d8, #7a7a7a);
}
.panel {
    min-width: 0;
    display: flex;
    flex-direction: column;
    border-right: 1px solid #bbb;
}
.panel h2 {
    position: relative;
    display: flex;
    align-items: center;
    justify-content: center;
    gap: 6px;
    height: 18px;
    margin: 0 1px;
    font: inherit;
    background: #ececec;
}
.launcher {
    position: absolute;
    right: 4px;
    bottom: 4px;
}
.body {
    flex: 1;
    min-height: 0;
    display: flex;
    padding: 5px 2px 0;
}
.body button {
    white-space: nowrap;
}
.stack {
    display: flex;
    flex-direction: column;
    gap: 2px;
}
.big {
    display: flex;
    flex-direction: column;
    align-items: center;
    flex: 0 0 40px;
    height: 70px;
    padding-top: 1px;
}
.big svg {
    margin-bottom: 5px;
}
.big .caret {
    margin-top: 3px;
}
.small {
    display: flex;
    align-items: center;
    gap: 5px;
    height: 22px;
    padding-top: 1px;
}
.small .caret {
    margin-left: 6px;
}
.tool, .split {
    display: flex;
    align-items: center;
    justify-content: center;
    width: 24px;
    height: 22px;
    border: 1px solid #ccc;
    background: linear-gradient(#fcfcfc, #ededed);
}
.body .split {
    width: 37px;
    padding-left: 1px;
    gap: 7px;
}
.split svg {
    box-shadow: 4px 0 0 #f4f4f4, 5px 0 0 #ccc;
}
.body .on {
    border-color: #2f6da8;
    background: #a6d2f7;
}
.draw .stack {
    margin-left: 5px;
}
.modify {
    display: grid;
    grid-template-columns: 59px 59px 72px 24px;
    grid-auto-rows: 22px;
    row-gap: 2px;
    padding-left: 7px;
}
.layers {
    flex-direction: column;
    gap: 3px;
}
.tool-row {
    display: flex;
    justify-content: space-between;
}
.pair {
    display: flex;
}
.pair .tool + .tool {
    border-left: 0;
}
.drop {
    display: flex;
    align-items: center;
    gap: 4px;
    min-width: 0;
    height: 22px;
    padding: 0 3px 0 2px;
    border: 1px solid #ccc;
    background: linear-gradient(#fcfcfc, #ececec);
}
.swatch {
    flex: none;
    width: 14px;
    height: 14px;
    margin: 0 1px;
    border: 1px solid #333;
    background: #f00;
}
.swatch.wide {
    width: 16px;
    height: 16px;
    margin: 0;
}
.annotate {
    padding-left: 6px;
}
.annotate .stack {
    margin-left: 8px;
}
.annotate .small .caret {
    margin-left: 2px;
}
.block .big {
    flex-basis: 39px;
}
.block .small {
    padding-left: 5px;
    gap: 4px;
}
.props {
    display: grid;
    grid-template-columns: 16px minmax(0, 1fr);
    grid-auto-rows: 22px;
    gap: 2px 3px;
    align-items: center;
    padding-left: 4px;
}
.line-drop {
    gap: 2px;
}
.side {
    justify-content: space-between;
}
.roomy {
    padding-left: 6px;
}

/* drawing area */
.workspace {
    flex: 1;
    min-height: 0;
    display: grid;
    grid-template-columns: minmax(0, 1fr) 19px 28px;
    grid-template-rows: minmax(0, 1fr);
    padding: 6px 4px 0 1px;
    overflow: hidden;
}
.viewport {
    position: relative;
    overflow: hidden;
    background: #21272f;
    border-top: 1px solid #aaa;
    border-left: 1px solid #999;
}
.drawing {
    display: block;
    width: 100%;
    fill: none;
    shape-rendering: crispEdges;
}
.white { stroke: #fff; }
.red { stroke: #c41a1a; }
.magenta { stroke: #d01cd8; }
.cyan { stroke: #35c4cc; }
.yellow { stroke: #e8e840; }
.green { stroke: #2fc42f; }
.gray { stroke: #999; }
.darkred { stroke: #6a1010; }
.shell {
    stroke-width: 3;
    stroke-dasharray: 1 2;
}
.block-text text {
    fill: #0f0;
    font-size: 8px;
    font-weight: bold;
}
.view-label {
    position: absolute;
    left: 4px;
    top: 5px;
    display: flex;
    gap: 4px;
    color: #e6e6e6;
}
.view-buttons {
    position: absolute;
    right: 9px;
    top: 8px;
    display: flex;
    gap: 8px;
}
.view-buttons svg {
    display: block;
}
.viewcube {
    position: absolute;
    right: 12px;
    top: 35px;
}
.viewcube text {
    fill: #b0b4b8;
    font-size: 14px;
    text-anchor: middle;
}
.viewcube .top-face {
    fill: #48535e;
    font-size: 23px;
}
.wcs {
    position: absolute;
    right: 37px;
    top: 148px;
    display: flex;
    align-items: center;
    justify-content: space-between;
    width: 48px;
    height: 17px;
    padding: 0 5px 0 4px;
    border: 1px solid #b3b6c0;
    border-radius: 3px;
    background: #9b9eaa;
    color: #5d606b;
    font: 10px/14px "Liberation Sans", sans-serif;
}
.navbar {
    position: absolute;
    right: 2px;
    top: 190px;
    display: flex;
    flex-direction: column;
    align-items: center;
    width: 33px;
    height: 214px;
    padding: 2px 0;
    border: 1px solid #5f646b;
    border-radius: 4px;
    background: rgba(130, 134, 140, .5);
}
.navbar button {
    display: flex;
    flex-direction: column;
    align-items: center;
    gap: 5px;
    padding-top: 5px;
}
.navbar .dot {
    align-self: flex-end;
    padding: 0 2px 3px;
}
.navbar .dot:last-child {
    margin-top: auto;
    padding-bottom: 0;
}
.navbar hr {
    width: 100%;
    margin: 3px 0 0;
    border: 0;
    border-top: 1px solid #6b7077;
}
.navbar svg {
    fill: none;
    stroke: #3a3f46;
}
.navbar .caret {
    border-top-color: #3a3f46;
}
.scrollbar {
    background: #efefef;
    border-right: 1px solid #fff;
    padding: 9px 5px;
}
.scrollbar i {
    display: block;
    width: 0;
    border: 4px solid transparent;
    border-top: 0;
    border-bottom-color: #333;
}
.toolbar {
    align-self: start;
    display: flex;
    flex-direction: column;
    align-items: center;
    margin-left: 4px;
    border: 1px solid #444;
    background: #e9e9e9;
}
.toolbar button {
    display: block;
    width: 16px;
    height: 22px;
    padding: 3px 0;
    background: #d6d3ce content-box;
}
.toolbar svg {
    display: block;
}
.grip {
    align-self: stretch;
    height: 7px;
    background: #666;
    border-bottom: 3px dotted #999;
}
```
